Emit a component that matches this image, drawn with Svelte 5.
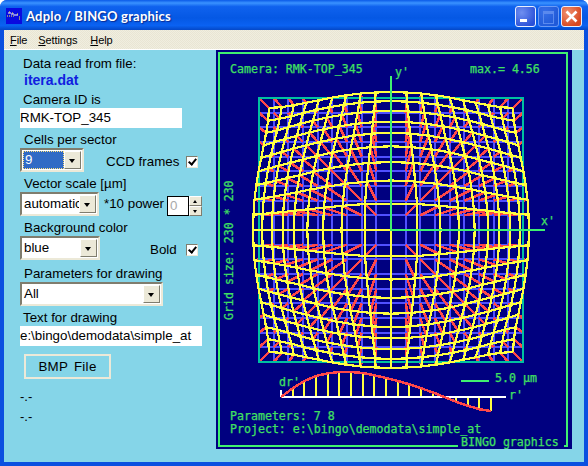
<script>
	// radial distortion profile, one value per 1/18 of the half diagonal
	const profile = [0, 8.7, 16, 21, 23.7, 25, 25, 24, 21.7, 19, 16, 12.7, 8.7, 4.7, 0, -4.7, -8.7, -12.3, -14];
	const cx = 391;
	const cy = 230;
	const cell = 132 / 9;
	const diag = 187;
	const range = Array.from({ length: 19 }, (_, i) => i - 9);

	function dr(r) {
		const t = Math.min((r / diag) * 18, 18);
		const i = Math.min(Math.floor(t), 17);
		return profile[i] + (profile[i + 1] - profile[i]) * (t - i);
	}

	function warp(ix, iy) {
		const x = ix * cell;
		const y = iy * cell;
		const r = Math.hypot(x, y);
		if (r === 0) return [cx, cy];
		const k = (r + dr(r)) / r;
		return [cx + x * k, cy + y * k];
	}

	const pts = (list) => list.map((p) => p[0].toFixed(1) + ',' + p[1].toFixed(1)).join(' ');

	const rows = range.map((j) => pts(range.map((i) => warp(i, j))));
	const cols = range.map((i) => pts(range.map((j) => warp(i, j))));

	const vectors = [];
	for (const i of range) {
		for (const j of range) {
			const [x2, y2] = warp(i, j);
			vectors.push({ x1: cx + i * cell, y1: cy + j * cell, x2, y2 });
		}
	}

	// little profile plot under the grid
	const px = (i) => 281 + (i * 210) / 18;
	const py = (i) => 397 - profile[i];
	const curve = pts(profile.map((_, i) => [px(i), py(i)]));
</script>

<div class="window">
	<header class="titlebar">
		<svg class="appicon" viewBox="0 0 16 16" aria-hidden="true">
			<rect width="16" height="16" fill="#0a0ae0" />
			<path d="M2 5h3M5 6h3M8 7h4" stroke="#fff" stroke-width="1" />
			<path d="M3 4h1M6 5h1M11 6h1M13 9h1M13 11h1" stroke="#ffff40" stroke-width="1" />
			<path d="M1 8h7" stroke="#ffff40" stroke-width="1" stroke-dasharray="1 1" />
		</svg>
		<span class="title">Adplo / BINGO graphics</span>
		<div class="winbtns">
			<div class="winbtn min"><i></i></div>
			<div class="winbtn max"><i></i></div>
			<div class="winbtn close">
				<svg viewBox="0 0 21 21" aria-hidden="true">
					<path d="M5.5 5.5l10 10M15.5 5.5l-10 10" stroke="#fff" stroke-width="2.6" />
				</svg>
			</div>
		</div>
	</header>

	<nav class="menubar">
		<span class="m-file"><u>F</u>ile</span>
		<span class="m-settings"><u>S</u>ettings</span>
		<span class="m-help"><u>H</u>elp</span>
	</nav>

	<main class="client">
		<section class="form">
			<div class="lab first">Data read from file:</div>
			<div class="file">itera.dat</div>

			<div class="lab gap4">Camera ID is</div>
			<div class="field wide1">RMK-TOP_345</div>

			<div class="lab gap4 in1">Cells per sector</div>
			<div class="row">
				<div class="combo w64 selected">
					<span class="value"><span class="focus">9</span></span>
					<span class="drop"></span>
				</div>
				<span class="check-label ccd">CCD frames</span>
				<span class="check"></span>
			</div>

			<div class="lab gap4 in1">Vector scale [µm]</div>
			<div class="row">
				<div class="combo w79">
					<span class="value">automatic</span>
					<span class="drop"></span>
				</div>
				<span class="check-label power">*10 power</span>
				<div class="spin">0</div>
				<div class="spinbtns">
					<span class="up"></span>
					<span class="down"></span>
				</div>
			</div>

			<div class="lab gap4 in1">Background color</div>
			<div class="row">
				<div class="combo w80">
					<span class="value">blue</span>
					<span class="drop"></span>
				</div>
				<span class="check-label bold">Bold</span>
				<span class="check"></span>
			</div>

			<div class="lab gap6 in1">Parameters for drawing</div>
			<div class="combo w143">
				<span class="value">All</span>
				<span class="drop"></span>
			</div>

			<div class="lab gap4">Text for drawing</div>
			<div class="field wide2">e:\bingo\demodata\simple_at</div>

			<div class="bmp">BMP File</div>

			<div class="dash d1">-.-</div>
			<div class="dash d2">-.-</div>
		</section>

		<svg class="plot" width="356" height="399" viewBox="216 50 356 399" shape-rendering="crispEdges" aria-label="BINGO graphics plot">
			<rect x="216" y="50" width="356" height="399" fill="#000080" />
			<path d="M458 445.5H219V52.5H567V445.5H564" fill="none" stroke="#40f070" stroke-width="2" />

			<g stroke="#5050ff" stroke-width="2">
				{#each range as k}
					<line x1={cx + k * cell} y1={cy - 132} x2={cx + k * cell} y2={cy + 132} />
					<line x1={cx - 132} y1={cy + k * cell} x2={cx + 132} y2={cy + k * cell} />
				{/each}
			</g>
			<g stroke="#ff4848" stroke-width="2.5">
				{#each vectors as v}
					<line x1={v.x1} y1={v.y1} x2={v.x2} y2={v.y2} />
				{/each}
			</g>
			<rect x="259" y="98" width="264" height="264" fill="none" stroke="#00c0a0" stroke-width="2" />
			<g fill="none" stroke="#ffff40" stroke-width="2.2">
				{#each rows as line}
					<polyline points={line} />
				{/each}
				{#each cols as line}
					<polyline points={line} />
				{/each}
			</g>
			<path d="M391 76V230H545" fill="none" stroke="#40f070" stroke-width="2" />

			<g stroke="#ffff40" stroke-width="2">
				{#each profile as _, i}
					<line x1={px(i)} y1="397" x2={px(i)} y2={py(i)} />
				{/each}
			</g>
			<path d="M281 397H506M281 390V397" fill="none" stroke="#fff" stroke-width="2" />
			<polyline points={curve} fill="none" stroke="#ff4848" stroke-width="2.5" />
			<path d="M461 381H489" stroke="#40f070" stroke-width="2" />

			<g class="mono">
				<text x="230" y="73">Camera: RMK-TOP_345</text>
				<text x="470" y="73">max.= 4.56</text>
				<text x="395" y="76">y'</text>
				<text x="541" y="225">x'</text>
				<text x="279" y="386">dr'</text>
				<text x="509" y="399">r'</text>
				<text x="495" y="382">5.0 µm</text>
				<text x="230" y="420">Parameters: 7 8</text>
				<text x="230" y="433">Project: e:\bingo\demodata\simple_at</text>
				<text x="461" y="446">BINGO graphics</text>
				<text transform="translate(233 320) rotate(-90)">Grid size: 230 * 230</text>
			</g>
		</svg>
	</main>
</div>

<style>
	:global(body) {
		margin: 0;
		background: #fff;
	}

	.window {
		width: 588px;
		height: 466px;
		box-sizing: border-box;
		display: flex;
		flex-direction: column;
		overflow: hidden;
		border-radius: 7px 7px 0 0;
		background: #0a50e0;
		font-family: "Liberation Sans", Arial, sans-serif;
		color: #000;
	}

	.titlebar {
		height: 30px;
		flex: none;
		display: flex;
		align-items: center;
		padding: 0 3px 0 6px;
		background: linear-gradient(180deg, #0a5ae8 0%, #3a93ff 10%, #0f62ee 22%, #0558e4 60%, #0a62f2 85%, #0448c8 100%);
	}

	.appicon {
		width: 16px;
		height: 16px;
		margin-top: 2px;
	}

	.title {
		margin-left: 4px;
		margin-top: 2px;
		font-family: Lato, sans-serif;
		font-weight: 700;
		font-size: 13px;
		letter-spacing: 0.2px;
		color: #fff;
		text-shadow: 1px 1px 1px #0a2a90;
	}

	.winbtns {
		margin-left: auto;
		display: flex;
		gap: 2px;
		margin-right: 3px;
		margin-top: 3px;
	}

	.winbtn {
		width: 21px;
		height: 21px;
		box-sizing: border-box;
		border: 1px solid #e8efff;
		border-radius: 3px;
		position: relative;
		background: radial-gradient(circle at 30% 30%, #6f8ff0, #2a50d8 80%);
	}

	.winbtn i {
		position: absolute;
		display: block;
	}

	.min i {
		left: 4px;
		bottom: 4px;
		width: 7px;
		height: 3px;
		background: #fff;
	}

	.max {
		opacity: 0.72;
		border-color: #8fb0f8;
		background: radial-gradient(circle at 30% 30%, #4a78e8, #2a58d0 80%);
	}

	.max i {
		left: 4px;
		top: 4px;
		width: 9px;
		height: 9px;
		border: 1px solid #7a9cf0;
		border-top-width: 3px;
	}

	.close {
		background: radial-gradient(circle at 30% 30%, #f09070, #d84820 75%);
	}

	.close svg {
		position: absolute;
		inset: -1px;
		width: 21px;
		height: 21px;
	}

	.menubar {
		height: 19px;
		flex: none;
		margin: 0 4px;
		background: repeating-conic-gradient(#f0eee0 0 25%, #e9e5d3 0 50%) 0 0 / 2px 2px;
		border-bottom: 1px solid #fff;
		display: flex;
		align-items: center;
		font-size: 11px;
		letter-spacing: -0.1px;
		position: relative;
	}

	.m-file {
		margin-left: 6px;
	}

	.m-settings {
		margin-left: 11px;
	}

	.m-help {
		margin-left: 13px;
	}

	.client {
		flex: 1;
		margin: 0 4px 4px;
		background: #85d5e8;
		display: flex;
		min-height: 0;
	}

	.form {
		width: 212px;
		flex: none;
		box-sizing: border-box;
		padding-left: 16px;
		display: flex;
		flex-direction: column;
		align-items: flex-start;
		font-size: 13.33px;
	}

	.lab {
		height: 16px;
		line-height: 16px;
		padding-left: 3px;
		white-space: nowrap;
	}

	.first {
		margin-top: 6px;
	}

	.in1 {
		padding-left: 4px;
	}

	.gap4 {
		margin-top: 4px;
	}

	.gap6 {
		margin-top: 6px;
	}

	.file {
		height: 16px;
		line-height: 16px;
		padding-left: 4px;
		font-weight: 700;
		font-size: 14px;
		color: #1020e0;
	}

	.field {
		height: 20px;
		line-height: 20px;
		background: #fff;
		white-space: nowrap;
		overflow: hidden;
	}

	.wide1 {
		width: 162px;
	}

	.wide2 {
		width: 182px;
	}

	.row {
		height: 24px;
		display: flex;
		align-items: flex-end;
		position: relative;
		width: 190px;
	}

	.combo {
		height: 24px;
		box-sizing: border-box;
		flex: none;
		background: #fff;
		border: 2px solid;
		border-color: #7f7d6e #ece9d8 #ece9d8 #7f7d6e;
		display: flex;
		padding: 1px;
	}

	.w64 {
		width: 64px;
	}

	.w79 {
		width: 79px;
	}

	.w80 {
		width: 80px;
	}

	.w143 {
		width: 143px;
	}

	.value {
		flex: 1;
		min-width: 0;
		overflow: hidden;
		white-space: nowrap;
		line-height: 18px;
		padding-left: 1px;
	}

	.selected .value {
		background: #316ac5;
		color: #fff;
		padding: 0;
	}

	.focus {
		display: block;
		height: 16px;
		line-height: 16px;
		border: 1px dotted #ffe080;
		padding-left: 1px;
	}

	.drop,
	.spinbtns span {
		position: relative;
		background: #ece9d8;
		border: 1px solid;
		border-color: #fff #7f7d6e #7f7d6e #fff;
		box-sizing: border-box;
	}

	.drop {
		width: 17px;
		flex: none;
	}

	.drop::after {
		content: "";
		position: absolute;
		left: 4px;
		top: 7px;
		border: 3.5px solid transparent;
		border-top: 4px solid #000;
		border-bottom: 0;
	}

	.check-label {
		line-height: 16px;
		white-space: nowrap;
	}

	.ccd {
		margin-left: 22px;
		margin-bottom: 2px;
	}

	.bold {
		margin-left: 50px;
		margin-bottom: 2px;
	}

	.power {
		margin-left: 5px;
		margin-bottom: 4px;
	}

	.check {
		position: absolute;
		left: 166px;
		bottom: 4px;
		width: 12px;
		height: 12px;
		box-sizing: border-box;
		background: #fff;
		border: 1px solid;
		border-color: #7f7d6e #ece9d8 #ece9d8 #7f7d6e;
	}

	.check::after {
		content: "";
		position: absolute;
		left: 3px;
		top: 0;
		width: 3px;
		height: 6px;
		border: solid #000;
		border-width: 0 2px 2px 0;
		transform: rotate(40deg);
	}

	.spin {
		width: 22px;
		height: 20px;
		box-sizing: border-box;
		margin-left: 3px;
		background: #fff;
		border: 1px solid #000;
		color: #aaa;
		line-height: 18px;
		padding-left: 2px;
	}

	.spinbtns {
		width: 13px;
		height: 20px;
		display: flex;
		flex-direction: column;
		flex: none;
	}

	.spinbtns span {
		flex: 1;
	}

	.up::after,
	.down::after {
		content: "";
		position: absolute;
		left: 3px;
		top: 3px;
		border: 2.5px solid transparent;
	}

	.up::after {
		border-bottom: 3px solid #000;
		border-top: 0;
	}

	.down::after {
		border-top: 3px solid #000;
		border-bottom: 0;
	}

	.bmp {
		margin: 8px 0 0 4px;
		width: 87px;
		height: 25px;
		box-sizing: border-box;
		border: 2px solid #ece9d8;
		text-align: center;
		line-height: 21px;
		letter-spacing: 0.3px;
		word-spacing: 2px;
	}

	.dash {
		height: 16px;
		line-height: 16px;
		font-size: 13px;
	}

	.d1 {
		margin-top: 10px;
	}

	.d2 {
		margin-top: 4px;
	}

	.plot {
		display: block;
		flex: none;
	}

	.mono text {
		font-family: "DejaVu Sans Mono", monospace;
		font-size: 11.6px;
		fill: #40e060;
		stroke: #40e060;
		stroke-width: 0.25px;
	}
</style>
